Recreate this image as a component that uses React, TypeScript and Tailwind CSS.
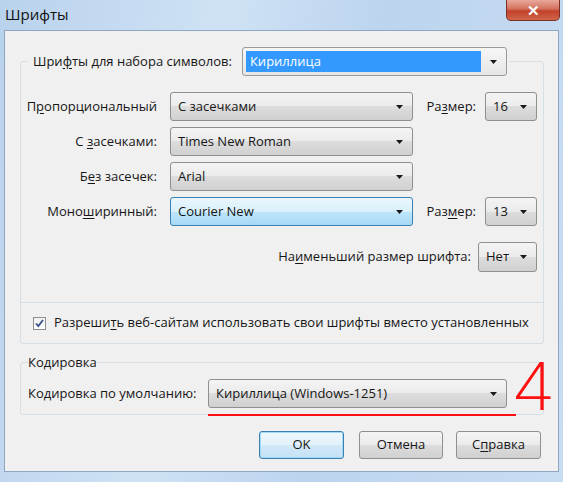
import type { ReactNode } from "react";

const font = "font-['Open_Sans','Noto_Sans',sans-serif]";

function Arrow() {
  return (
    <svg width="7" height="4" viewBox="0 0 7 4" className="shrink-0">
      <path d="M0 0h7L3.5 4z" fill="#1a1a1a" />
    </svg>
  );
}

function Combo({
  value,
  className,
  hot,
}: {
  value: string;
  className: string;
  hot?: boolean;
}) {
  return (
    <div
      className={`flex h-[29px] items-center justify-between rounded-[3px] border pl-[7px] pr-[9px] ${
        hot
          ? "border-[#3c7fb1] bg-[linear-gradient(#eaf6fd,#d9f0fc_50%,#bee6fd_50%,#a7d9f5)]"
          : "border-[#8e8f8f] bg-[linear-gradient(#f4f4f4,#ebebeb_50%,#dddddd_50%,#d0d0d0)]"
      } ${className}`}
    >
      <span>{value}</span>
      <Arrow />
    </div>
  );
}

function U({ children }: { children: ReactNode }) {
  return <span className="underline underline-offset-2">{children}</span>;
}

function Button({
  children,
  className,
  primary,
}: {
  children: ReactNode;
  className: string;
  primary?: boolean;
}) {
  return (
    <div
      className={`flex h-[28px] items-center justify-center rounded-[3px] border ${
        primary
          ? "border-[#3c7fb1] shadow-[inset_0_0_0_1px_#9fdcf8] bg-[linear-gradient(#eef7fd,#e2f1fb_50%,#d2e9f8_50%,#c4e1f5)]"
          : "border-[#8e8f8f] bg-[linear-gradient(#f4f4f4,#ebebeb_50%,#dddddd_50%,#d0d0d0)]"
      } ${className}`}
    >
      {children}
    </div>
  );
}

export default function App() {
  return (
    <div
      className={`flex h-[482px] w-[563px] flex-col overflow-hidden whitespace-nowrap bg-[linear-gradient(100deg,#b9d2ec,#cfe2f5_35%,#bcd4ee_60%,#c8ddf2)] text-[13px] text-[#161616] ${font}`}
    >
      {/* title bar */}
      <div className="flex h-[30px] shrink-0 items-start justify-between">
        <div className="pl-[5px] pt-[5px] text-[15px] leading-[19px] text-[#101010]">Шрифты</div>
        <div className="mr-[3px] flex h-[21px] w-[54px] items-center justify-center rounded-b-[5px] border border-t-0 border-[#7a2f24] bg-[linear-gradient(#e9a99b,#d4705c_45%,#c2412b_55%,#d1654a)] text-[15px] font-bold leading-none text-white">
          ✕
        </div>
      </div>

      {/* client area */}
      <div className="relative mx-[4px] h-[442px] shrink-0 border border-[#8fa5c0] bg-[#f0f0f0] px-[15px] pt-[16px]">
        <fieldset className="m-0 w-[524px] min-w-0 rounded-[3px] border border-[#d5dfe5] p-0">
          <legend className="ml-[7px] flex h-[29px] items-center pl-[5px] pr-[2px]">
            <span>
              Шри<U>ф</U>ты для набора символов:
            </span>
            <div className="ml-[10px] flex h-[29px] w-[265px] items-center rounded-[3px] border border-[#9a9a9a] bg-[linear-gradient(#f6f6f6,#e6e6e6)] pl-[3px] pr-[9px]">
              <div className="flex h-[21px] flex-1 items-center bg-[#3399ff] pl-[4px] text-white">Кириллица</div>
              <div className="ml-[9px]">
                <Arrow />
              </div>
            </div>
          </legend>

          <div className="flex flex-col pt-[16px]">
            <div className="flex h-[29px] items-center pr-[6px]">
              <span className="w-[136px] text-right">
                П<U>р</U>опорциональный
              </span>
              <Combo value="С засечками" className="ml-[13px] w-[243px]" />
              <div className="ml-auto flex items-center">
                <span>
                  Ра<U>з</U>мер:
                </span>
                <Combo value="16" className="ml-[9px] w-[52px]" />
              </div>
            </div>
            <div className="mt-[6px] flex h-[29px] items-center">
              <span className="w-[136px] text-right">
                С <U>з</U>асечками:
              </span>
              <Combo value="Times New Roman" className="ml-[13px] w-[243px]" />
            </div>
            <div className="mt-[6px] flex h-[29px] items-center">
              <span className="w-[136px] text-right">
                Б<U>е</U>з засечек:
              </span>
              <Combo value="Arial" className="ml-[13px] w-[243px]" />
            </div>
            <div className="mt-[6px] flex h-[29px] items-center pr-[6px]">
              <span className="w-[136px] text-right">
                Моно<U>ш</U>иринный:
              </span>
              <Combo value="Courier New" className="ml-[13px] w-[243px]" hot />
              <div className="ml-auto flex items-center">
                <span>
                  Раз<U>м</U>ер:
                </span>
                <Combo value="13" className="ml-[9px] w-[52px]" />
              </div>
            </div>
            <div className="mt-[16px] flex h-[30px] items-center justify-end pr-[6px]">
              <span>
                На<U>и</U>меньший размер шрифта:
              </span>
              <Combo value="Нет" className="ml-[7px] h-[30px] w-[59px]" />
            </div>

            <div className="mt-[30px] border-t border-[#d5dfe5]" />
            <div className="flex h-[40px] items-center pl-[12px]">
              <div className="flex h-[13px] w-[13px] items-center justify-center border border-[#8e8f8f] bg-[linear-gradient(#f0f0f0,#ffffff)]">
                <svg width="9" height="9" viewBox="0 0 9 9">
                  <path d="M1 4.5l2.3 2.6L8 1" fill="none" stroke="#3a4f8a" strokeWidth="1.8" />
                </svg>
              </div>
              <span className="ml-[8px]">
                Разреши<U>т</U>ь веб-сайтам использовать свои шрифты вместо установленных
              </span>
            </div>
          </div>
        </fieldset>

        <fieldset className="m-0 mt-[10px] w-[524px] min-w-0 rounded-[3px] border border-[#d5dfe5] p-0">
          <legend className="ml-[7px] leading-[17px]">Кодировка</legend>
          <div className="flex items-center pb-[6px] pl-[7px] pt-[8px]">
            <span className="w-[180px]">Кодировка по умолчанию:</span>
            <Combo value="Кириллица (Windows-1251)" className="w-[299px]" />
          </div>
        </fieldset>

        <div className="mt-[16px] flex justify-end pr-[2px]">
          <Button primary className="w-[85px]">
            OK
          </Button>
          <Button className="ml-[15px] w-[84px]">Отмена</Button>
          <Button className="ml-[13px] w-[85px]">
            С<U>п</U>равка
          </Button>
        </div>

        {/* red annotation */}
        <div className="absolute left-[203px] top-[383px] h-[2px] w-[308px] bg-[#ff1010]" />
        <div className="absolute left-[506px] top-[322px] origin-left scale-x-110 font-['Inter',sans-serif] text-[66px] font-extralight leading-none text-[#ff1010]">
          4
        </div>
      </div>
    </div>
  );
}
